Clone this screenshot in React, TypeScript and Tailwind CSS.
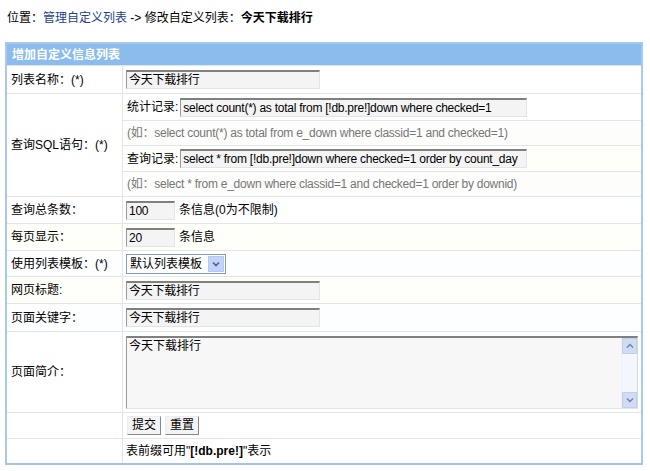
import React from "react";

const font = { fontFamily: '"Liberation Sans", "Noto Sans CJK SC", sans-serif' };

function TextInput({ value, w }: { value: string; w: string }) {
  return (
    <div
      className={`${w} h-[19px] bg-[#f4f4f4] border-t-2 border-l border-b border-r border-t-[#808080] border-l-[#9a9a9a] border-b-[#e4e4e4] border-r-[#e4e4e4] px-[2px] text-[12px] leading-[16px] text-black whitespace-nowrap overflow-hidden tracking-[-0.25px]`}
    >
      {value}
    </div>
  );
}

function Btn({ label }: { label: string }) {
  return (
    <div className="h-[19px] px-[4px] bg-[#f4f4f4] border border-t-[#ececec] border-l-[#ececec] border-b-[#888] border-r-[#888] text-[12px] leading-[17px] flex items-center">
      {label}
    </div>
  );
}

function Row({
  label,
  children,
  h,
  bg = "bg-white",
}: {
  label: string;
  children: React.ReactNode;
  h: string;
  bg?: string;
}) {
  return (
    <div className={`flex ${h} border-b border-[#dfe6f0] ${bg}`}>
      <div className="w-[116px] shrink-0 border-r border-[#dfe6f0] flex items-center pl-[4px] text-[12px]">
        {label}
      </div>
      <div className="flex-1 flex items-center pl-[3px]">{children}</div>
    </div>
  );
}

export default function App() {
  return (
    <div className="w-[650px] h-[471px] bg-white text-black" style={font}>
      <div className="h-[42px] pt-[11px] pl-[7px] text-[12px] leading-[14px]">
        位置：<span className="text-[#1c3f8d]">管理自定义列表</span> -&gt; 修改自定义列表：<b>今天下载排行</b>
      </div>
      <div className="ml-[5px] w-[638px] border-2 border-[#a8c8ee] border-b-[#a3c2e6]">
        <div className="h-[22px] bg-[#8cbbed] border-b border-[#dfe6f0] flex items-center pl-[5px] text-[12px] font-bold text-white">
          增加自定义信息列表
        </div>
        <Row label="列表名称：(*)" h="h-[28px]">
          <TextInput value="今天下载排行" w="w-[194px]" />
        </Row>
        <div className="flex h-[103px] border-b border-[#dfe6f0] bg-white">
          <div className="w-[116px] shrink-0 border-r border-[#dfe6f0] flex items-center pl-[4px] text-[12px]">
            查询SQL语句：(*)
          </div>
          <div className="flex-1 flex flex-col text-[12px]">
            <div className="h-[27px] border-b border-[#dfe6f0] flex items-center pl-[4px] bg-white">
              <span className="mr-[2px]">统计记录:</span>
              <TextInput value="select count(*) as total from [!db.pre!]down where checked=1" w="w-[347px]" />
            </div>
            <div className="h-[25px] border-b border-[#dfe6f0] flex items-center pl-[4px] text-[#777] bg-[#fdfdfb] tracking-[-0.25px]">
              (如：select count(*) as total from e_down where classid=1 and checked=1)
            </div>
            <div className="h-[26px] border-b border-[#dfe6f0] flex items-center pl-[4px] bg-[#fffffa]">
              <span className="mr-[2px]">查询记录:</span>
              <TextInput value="select * from [!db.pre!]down where checked=1 order by count_day" w="w-[347px]" />
            </div>
            <div className="flex-1 flex items-center pl-[4px] text-[#777] bg-[#fdfdfb] tracking-[-0.25px]">
              (如：select * from e_down where classid=1 and checked=1 order by downid)
            </div>
          </div>
        </div>
        <Row label="查询总条数：" h="h-[27px]">
          <TextInput value="100" w="w-[49px]" />
          <span className="ml-[4px] text-[12px]">条信息(0为不限制)</span>
        </Row>
        <Row label="每页显示：" h="h-[27px]" bg="bg-[#fffffa]">
          <TextInput value="20" w="w-[49px]" />
          <span className="ml-[4px] text-[12px]">条信息</span>
        </Row>
        <Row label="使用列表模板：(*)" h="h-[26px]" bg="bg-[#fdfeff]">
          <div className="w-[100px] h-[20px] border border-[#7f9db9] bg-white flex items-center text-[12px]">
            <span className="flex-1 pl-[3px]">默认列表模板</span>
            <div className="w-[16px] h-[16px] mr-[1px] bg-[#c1d3fb] border border-[#b5c8f0] flex items-center justify-center">
              <svg width="8" height="6" viewBox="0 0 8 6">
                <path d="M1 1.5 L4 4.5 L7 1.5" stroke="#4d6185" strokeWidth="1.6" fill="none" />
              </svg>
            </div>
          </div>
        </Row>
        <Row label="网页标题:" h="h-[27px]" bg="bg-[#fffffa]">
          <TextInput value="今天下载排行" w="w-[194px]" />
        </Row>
        <Row label="页面关键字：" h="h-[28px]" bg="bg-[#fdfeff]">
          <TextInput value="今天下载排行" w="w-[194px]" />
        </Row>
        <Row label="页面简介：" h="h-[81px]">
          <div className="w-[512px] h-[73px] flex bg-[#f7f7f7] border-t-2 border-l border-b border-r border-t-[#808080] border-l-[#9a9a9a] border-b-[#e4e4e4] border-r-[#d8d8d8]">
            <div className="flex-1 px-[2px] pt-[1px] text-[12px] leading-[15px]">今天下载排行</div>
            <div className="w-[16px] flex flex-col justify-between bg-[#f3f7fd] border-l border-[#eef2f8]">
              <div className="h-[16px] bg-[#cfdcf4] border border-[#bfcfee] flex items-center justify-center">
                <svg width="8" height="6" viewBox="0 0 8 6">
                  <path d="M1 4.5 L4 1.5 L7 4.5" stroke="#6d83aa" strokeWidth="1.4" fill="none" />
                </svg>
              </div>
              <div className="h-[16px] bg-[#cfdcf4] border border-[#bfcfee] flex items-center justify-center">
                <svg width="8" height="6" viewBox="0 0 8 6">
                  <path d="M1 1.5 L4 4.5 L7 1.5" stroke="#6d83aa" strokeWidth="1.4" fill="none" />
                </svg>
              </div>
            </div>
          </div>
        </Row>
        <Row label="" h="h-[26px]">
          <div className="flex gap-[4px] pl-[1px]">
            <Btn label="提交" />
            <Btn label="重置" />
          </div>
        </Row>
        <div className="flex h-[24px] bg-white">
          <div className="w-[116px] shrink-0 border-r border-[#dfe6f0]" />
          <div className="flex-1 flex items-center pl-[3px] text-[12px]">
            表前缀可用"<b>[!db.pre!]</b>"表示
          </div>
        </div>
      </div>
    </div>
  );
}
